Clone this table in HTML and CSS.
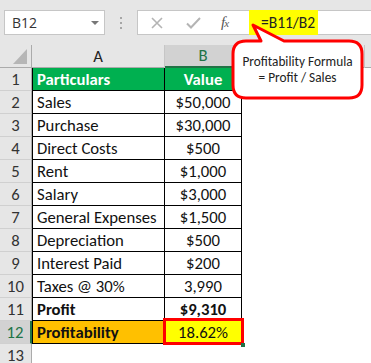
FILE: index.html
```html
<!DOCTYPE html>
<html>
<head>
<meta charset="utf-8">
<link rel="stylesheet" href="styles.css">
</head>
<body>
<div class="app">
  <div class="toolbar">
    <div class="namebox">
      <span class="name">B12</span>
      <span class="caret"></span>
    </div>
    <div class="dots"><i></i><i></i><i></i></div>
    <div class="fbar">
      <div class="ficons">
        <svg class="ic-x" width="12" height="12" viewBox="0 0 12 12"><path d="M1 1 L11 11 M11 1 L1 11" stroke="#b4b4b4" stroke-width="1.6" fill="none"/></svg>
        <svg class="ic-check" width="15" height="12" viewBox="0 0 15 12"><path d="M1 6.5 L5 10.5 L14 1" stroke="#b4b4b4" stroke-width="2" fill="none"/></svg>
        <span class="fx">f<small>x</small></span>
      </div>
      <div class="formula"><span class="hl">=B11/B2</span></div>
    </div>
  </div>

  <div class="sheet">
    <div class="row hdr">
      <div class="corner"><span class="tri"></span></div>
      <div class="ch">A</div>
      <div class="ch sel">B</div>
      <div class="ch"></div>
      <div class="ch rest"></div>
    </div>
    <div class="row"><div class="rn">1</div><div class="c a head">Particulars</div><div class="c b head">Value</div></div>
    <div class="row"><div class="rn">2</div><div class="c a">Sales</div><div class="c b">$50,000</div></div>
    <div class="row"><div class="rn">3</div><div class="c a">Purchase</div><div class="c b">$30,000</div></div>
    <div class="row"><div class="rn">4</div><div class="c a">Direct Costs</div><div class="c b">$500</div></div>
    <div class="row"><div class="rn">5</div><div class="c a">Rent</div><div class="c b">$1,000</div></div>
    <div class="row"><div class="rn">6</div><div class="c a">Salary</div><div class="c b">$3,000</div></div>
    <div class="row"><div class="rn">7</div><div class="c a">General Expenses</div><div class="c b">$1,500</div></div>
    <div class="row"><div class="rn">8</div><div class="c a">Depreciation</div><div class="c b">$500</div></div>
    <div class="row"><div class="rn">9</div><div class="c a">Interest Paid</div><div class="c b">$200</div></div>
    <div class="row"><div class="rn">10</div><div class="c a">Taxes @ 30%</div><div class="c b">3,990</div></div>
    <div class="row"><div class="rn">11</div><div class="c a bold">Profit</div><div class="c b bold">$9,310</div></div>
    <div class="row"><div class="rn rsel">12</div><div class="c a bold orange">Profitability</div><div class="c b yellow"><span>18.62%</span><i class="handle"></i></div></div>
    <div class="row"><div class="rn">13</div></div>
  </div>

  <div class="callout">
    <svg class="bubble" width="140" height="82" viewBox="0 0 140 82">
      <path d="M18 21 L33 21 L25 5 L56 21 L121 21 Q134 21 134 34 L134 65 Q134 78 121 78 L18 78 Q5 78 5 65 L5 34 Q5 21 18 21 Z" fill="#ffffff" stroke="#ff0000" stroke-width="3" stroke-linejoin="round"/>
    </svg>
    <div class="ctext"><div>Profitability Formula</div><div>= Profit / Sales</div></div>
  </div>
</div>
</body>
</html>
```

FILE: styles.css
```css
html, body {
  margin: 0;
  padding: 0;
  background: #ffffff;
}
body {
  width: 371px;
  height: 363px;
  overflow: hidden;
  font-family: Carlito, Lato, "Liberation Sans", sans-serif;
}
.app {
  position: relative;
  width: 371px;
  height: 363px;
  overflow: hidden;
}

/* toolbar */
.toolbar {
  height: 45px;
  background: #e6e6e6;
  display: flex;
  align-items: flex-start;
  padding-top: 10px;
  box-sizing: border-box;
}
.namebox {
  margin-left: 4px;
  width: 101px;
  height: 25px;
  box-sizing: border-box;
  background: #fff;
  border: 1px solid #c6c6c6;
  display: flex;
  align-items: center;
  justify-content: space-between;
  padding: 0 5px 0 7px;
}
.name {
  font-family: "Open Sans", "Noto Sans", sans-serif;
  font-size: 14px;
  color: #333;
}
.caret {
  width: 0;
  height: 0;
  border-left: 4px solid transparent;
  border-right: 4px solid transparent;
  border-top: 4px solid #777;
}
.dots {
  width: 32px;
  height: 25px;
  display: flex;
  flex-direction: column;
  align-items: center;
  justify-content: center;
  gap: 3px;
}
.dots i {
  display: block;
  width: 2px;
  height: 2px;
  background: #a6a6a6;
}
.fbar {
  flex: 1;
  height: 25px;
  box-sizing: border-box;
  background: #fff;
  border: 1px solid #c6c6c6;
  border-right: none;
  display: flex;
}
.ficons {
  width: 111px;
  display: flex;
  align-items: center;
  padding-left: 13px;
  box-sizing: border-box;
}
.ic-x { margin-right: 23px; }
.ic-check { margin-right: 20px; }
.fx {
  font-family: "Liberation Serif", serif;
  font-style: italic;
  font-size: 15px;
  color: #555;
  letter-spacing: -1px;
}
.fx small { font-size: 11px; }
.formula {
  flex: 1;
  display: flex;
}
.hl {
  margin-top: -1px;
  height: 25px;
  width: 69px;
  background: #ffff00;
  box-sizing: border-box;
  padding-left: 12px;
  font-size: 15.5px;
  line-height: 25px;
  color: #222;
}

/* sheet */
.row {
  display: grid;
  grid-template-columns: 32px 133px 77px 123px 1fr;
  height: 23px;
}
.hdr {
  background: #e6e6e6;
  border-bottom: 1px solid #ababab;
  box-sizing: border-box;
}
.corner {
  position: relative;
  border-right: 1px solid #ababab;
}
.tri {
  position: absolute;
  right: 4px;
  bottom: 4px;
  width: 0;
  height: 0;
  border-left: 14px solid transparent;
  border-bottom: 15px solid #b6b6b6;
}
.ch {
  border-right: 1px solid #c6c6c6;
  text-align: center;
  font-size: 16.7px;
  line-height: 22px;
  color: #222;
}
.ch.rest { border-right: none; }
.ch.sel {
  background: #d2d2d2;
  color: #217346;
  border-bottom: 2px solid #217346;
  line-height: 21px;
}
.rn {
  background: #e6e6e6;
  border-right: 1px solid #ababab;
  border-bottom: 1px solid #d0d0d0;
  box-sizing: border-box;
  text-align: center;
  font-size: 16.7px;
  line-height: 22px;
  color: #333;
}
.rn.rsel {
  background: #d2d2d2;
  color: #217346;
  border-right: 2px solid #217346;
}
.c {
  box-sizing: border-box;
  border-bottom: 1px solid #000;
  border-right: 1px solid #000;
  font-size: 16.7px;
  line-height: 22px;
  color: #111;
  white-space: nowrap;
}
.c.a {
  border-left: 1px solid #000;
  padding-left: 4px;
}
.c.b { text-align: center; }
.head {
  background: #00b050;
  color: #fff;
  font-weight: bold;
}
.bold { font-weight: bold; }
.orange { background: #ffc000; }
.yellow {
  position: relative;
  background: #ffff00;
}
.yellow::after {
  content: "";
  position: absolute;
  left: -2px;
  top: -3px;
  right: -3px;
  bottom: -2px;
  border: 3px solid #ff0000;
}
.handle {
  position: absolute;
  right: -4px;
  bottom: -4px;
  width: 4px;
  height: 4px;
  background: #217346;
  z-index: 2;
}

/* callout */
.callout {
  position: absolute;
  left: 228px;
  top: 20px;
  width: 140px;
  height: 82px;
}
.bubble {
  position: absolute;
  left: 0;
  top: 0;
}
.ctext {
  position: absolute;
  left: 5px;
  top: 21px;
  width: 129px;
  height: 57px;
  display: flex;
  flex-direction: column;
  align-items: center;
  justify-content: center;
  text-align: center;
  font-size: 13.3px;
  line-height: 16px;
  color: #222;
}
```
